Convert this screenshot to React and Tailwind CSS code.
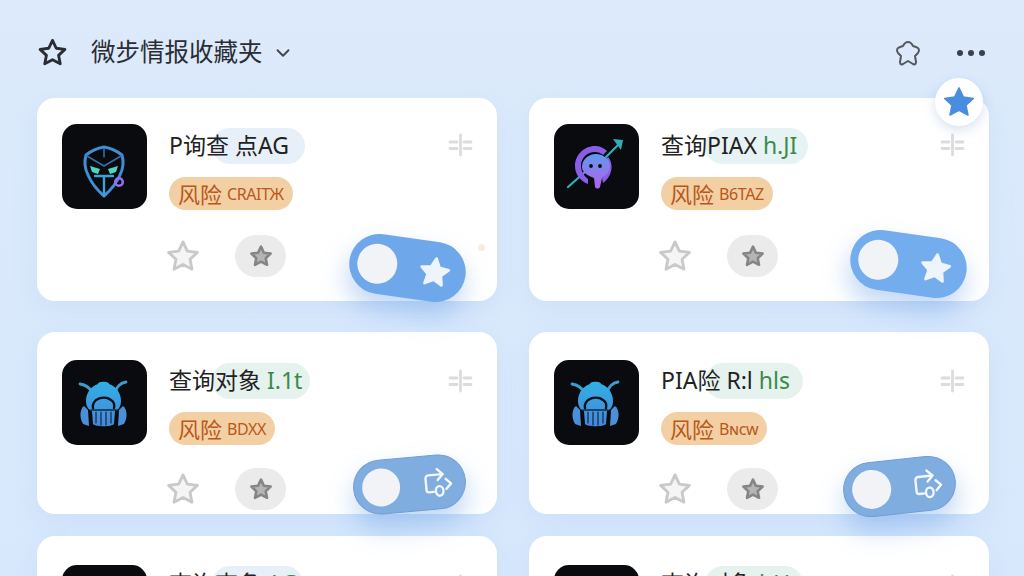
import React from "react";
import { ChevronDown } from "lucide-react";

const STAR = "M12 2.6l2.9 6.1 6.7.9-4.9 4.6 1.3 6.6-6-3.2-6 3.2 1.3-6.6-4.9-4.6 6.7-.9z";

const Star = ({ className, fill = "none", stroke = "currentColor", strokeWidth = 2 }) => (
  <svg viewBox="0 0 24 24" className={className} fill={fill} stroke={stroke} strokeWidth={strokeWidth} strokeLinejoin="round">
    <path d={STAR} />
  </svg>
);

const MaskLogo = () => (
  <svg viewBox="0 0 85 85" className="w-[85px] h-[85px]" fill="none" strokeLinejoin="round" strokeLinecap="round">
    <path d="M42 23c6 1 13 4 18 8 2 7 1 14-2 20-3 7-8 14-16 21-8-7-13-14-16-21-3-6-4-13-2-20 5-4 12-7 18-8z" stroke="#3f8fd6" strokeWidth="3" />
    <path d="M25 32l17 10 17-10M42 25v8" stroke="#2f6fae" strokeWidth="1.6" />
    <path d="M33 52h18M42 52v19" stroke="#3f9fd6" strokeWidth="2.4" />
    <path d="M28 42l10 3-2 5-6-2z" fill="#4fd6c0" />
    <path d="M56 42l-10 3 2 5 6-2z" fill="#4fd6c0" />
    <circle cx="57" cy="58" r="3.8" stroke="#9a6cf0" strokeWidth="2.6" />
  </svg>
);

const TrunkLogo = () => (
  <svg viewBox="0 0 85 85" className="w-[85px] h-[85px]" fill="none" strokeLinecap="round" strokeLinejoin="round">
    <defs>
      <linearGradient id="trunk" x1="0" y1="0" x2="0" y2="1">
        <stop offset="0" stopColor="#5f9bf0" />
        <stop offset="1" stopColor="#b45fe8" />
      </linearGradient>
    </defs>
    <path d="M14 63l17-15M52 33l15-15" stroke="#2fb0b8" strokeWidth="2.2" />
    <path d="M59 15l10 1-2 10z" fill="#2fb0b8" />
    <path d="M34 60c-8-3-13-10-13-18 0-11 9-20 20-20 5 0 9 2 12 5l-4 4c-2-2-5-3-8-3-8 0-14 6-14 14 0 5 3 10 7 13z" fill="#8a5ce8" />
    <path d="M54 33c5 5 6 18-5 26l-1-5c5-5 6-12 3-18z" fill="#8a5ce8" />
    <path d="M28 43a14 13 0 0 1 28 0c0 6-6 9-8 11l-2 9c-1 2-4 2-5 0l-1-9c-5-2-12-5-12-11z" fill="url(#trunk)" />
    <circle cx="37" cy="42" r="1.9" fill="#0b0b10" />
    <circle cx="46" cy="42" r="1.9" fill="#0b0b10" />
  </svg>
);

const BugLogo = () => (
  <svg viewBox="0 0 85 85" className="w-[85px] h-[85px]" fill="none" strokeLinecap="round" strokeLinejoin="round">
    <defs>
      <linearGradient id="bug" x1="0" y1="0" x2="0" y2="1">
        <stop offset="0" stopColor="#2fb0e6" />
        <stop offset="1" stopColor="#4a86d8" />
      </linearGradient>
    </defs>
    <path d="M31 33c-3-5-6-8-13-9M52 33c3-5 5-10 12-11" stroke="#3d9ccc" strokeWidth="2.8" />
    <path d="M36 24c0-3 11-3 11 0 7 2 12 9 12 17 0 6-3 9-6 10l-1 13c-2 3-19 3-21 0l-1-13c-3-1-6-4-6-10 0-8 5-15 12-17z" fill="url(#bug)" />
    <path d="M31 48c-1-4 1-6 3-8 5-3 11-3 15 0 3 2 4 4 3 8" stroke="#0b1016" strokeWidth="2.4" />
    <path d="M29 50h25" stroke="#0d2a44" strokeWidth="1.6" />
    <path d="M34 52v11M39 52v13M44 52v13M49 52v11" stroke="#0d2a44" strokeWidth="1.2" />
    <path d="M22 46c-4 3-5 11-1 18l6 2-1-16z" fill="#4a8fd8" />
    <path d="M61 46c4 3 5 11 1 18l-6 2 1-16z" fill="#4a8fd8" />
  </svg>
);

const ShareIcon = () => (
  <svg viewBox="0 0 34 34" className="w-[34px] h-[34px]" fill="none" stroke="#f4f7fc" strokeWidth="2.4" strokeLinecap="round" strokeLinejoin="round">
    <path d="M12 26H7a2 2 0 0 1-2-2V12a3 3 0 0 1 3-3h14" />
    <path d="M17 3.5l5.5 5.5-5.5 5.5" />
    <ellipse cx="18" cy="25.5" rx="3.8" ry="4.8" />
    <path d="M25 14l5 5-5 5" />
  </svg>
);

const Grip = () => (
  <svg viewBox="0 0 25 25" className="w-[25px] h-[25px] shrink-0" stroke="#dcdcdc" strokeWidth="2.8" strokeLinecap="round">
    <path d="M12.5 2v20M2 9h7M2 15.5h7M16 9h7M16 15.5h7" />
  </svg>
);

const cards = [
  {
    logo: <MaskLogo />,
    title: "P询查 点AG",
    tag: "",
    pill: "left-[43px] w-[93px] bg-[#e7f0f9]",
    code: "CRAITЖ",
    box: "h-[203px] pt-[26px] mb-[9px]",
    titleBox: "pt-1",
    actions: "mt-[25px]",
    toggle: "left-[312px] top-[140px] w-[117px] h-[60px] rotate-[8deg] bg-[#6fa8ea] pl-2 pr-[14px]",
    knob: "w-10 h-10",
    icon: <Star className="w-[34px] h-[34px]" fill="#eef4fc" stroke="#eef4fc" />,
  },
  {
    logo: <TrunkLogo />,
    title: "查询PIAX ",
    tag: "h.JI",
    pill: "left-[44px] w-[103px] bg-[#e6f2f3]",
    code: "B6TAZ",
    box: "h-[203px] pt-[26px] mb-[9px]",
    titleBox: "pt-1",
    actions: "mt-[25px]",
    toggle: "left-[321px] top-[136px] w-[117px] h-[60px] rotate-[8deg] bg-[#74adee] pl-2 pr-[14px]",
    knob: "w-10 h-10",
    icon: <Star className="w-[34px] h-[34px]" fill="#eef4fc" stroke="#eef4fc" />,
  },
  {
    logo: <BugLogo />,
    title: "查询对象 ",
    tag: "I.1t",
    pill: "left-[43px] w-[98px] bg-[#e6f2ee]",
    code: "BDXX",
    box: "h-[182px] pt-[28px]",
    titleBox: "pt-[3px]",
    actions: "mt-[23px]",
    toggle: "left-[316px] top-[125px] w-[113px] h-[55px] -rotate-[5deg] bg-[#7fade0] border border-[#6f9fd6] pl-2 pr-[10px]",
    knob: "w-[38px] h-[38px]",
    icon: <ShareIcon />,
  },
  {
    logo: <BugLogo />,
    title: "PIA险 R:l ",
    tag: "hls",
    pill: "left-[44px] w-[98px] bg-[#e6f2ee]",
    code: "Bɴcw",
    box: "h-[182px] pt-[28px]",
    titleBox: "pt-[3px]",
    actions: "mt-[23px]",
    toggle: "left-[314px] top-[127px] w-[113px] h-[55px] -rotate-[6deg] bg-[#7fade0] border border-[#6f9fd6] pl-2 pr-[10px]",
    knob: "w-[39px] h-[39px]",
    icon: <ShareIcon />,
  },
  {
    logo: <BugLogo />,
    title: "查询查条 ",
    tag: "AG",
    pill: "left-[43px] w-[91px] bg-[#e7f0f9]",
    code: "CRAIT",
    box: "h-[182px] pt-[29px]",
    titleBox: "pt-px",
    actions: "mt-[23px]",
  },
  {
    logo: <BugLogo />,
    title: "查询对象 ",
    tag: "hU",
    pill: "left-[44px] w-[98px] bg-[#e6f2ee]",
    code: "BDXX",
    box: "h-[182px] pt-[29px]",
    titleBox: "pt-px",
    actions: "mt-[23px]",
  },
];

function Card({ card, index }) {
  return (
    <div className={`relative bg-white rounded-[18px] pl-[25px] pr-6 shadow-[0_8px_24px_rgba(150,190,240,0.18)] ${card.box}`}>
      <div className="flex items-start gap-[22px]">
        <div className="w-[85px] h-[85px] rounded-[15px] bg-[#0a0b0e] overflow-hidden shrink-0">{card.logo}</div>
        <div className={`flex-1 ${card.titleBox}`}>
          <div className="relative h-9 flex items-center pb-[2px] text-[23px] leading-none text-[#222]">
            <span className={`absolute top-0 h-9 rounded-full ${card.pill}`} />
            <span className="relative whitespace-pre">{card.title}</span>
            <span className="relative text-[#3a8a4a]">{card.tag}</span>
          </div>
          <div className="mt-[13px] inline-flex items-center gap-[5px] h-[33px] px-[9px] rounded-full bg-[#f3cfa4] text-[#b8581a]">
            <span className="text-[22px] leading-none">风险</span>
            <span className="text-[16px] leading-none tracking-tight">{card.code}</span>
          </div>
        </div>
        <div className="mt-[9px]"><Grip /></div>
      </div>
      <div className={`flex items-center gap-[34px] ml-[103px] ${card.actions}`}>
        <Star className="w-[36px] h-[36px]" fill="#f5f5f5" stroke="#c9c9c9" strokeWidth={1.9} />
        <div className="w-[51px] h-[42px] rounded-full bg-[#ebebeb] flex items-center justify-center">
          <Star className="w-[24px] h-[24px]" fill="#b5b5b5" stroke="#858585" strokeWidth={2.6} />
        </div>
      </div>
      {card.toggle && (
        <div className={`absolute z-10 flex items-center justify-between rounded-full shadow-[0_14px_26px_rgba(90,150,230,0.38)] ${card.toggle}`}>
          <div className={`rounded-full bg-[#f2f3f7] ${card.knob}`} />
          {card.icon}
        </div>
      )}
      {index === 0 && <span className="absolute left-[441px] top-[146px] w-[7px] h-[7px] rounded-full bg-[#f5ecdf]" />}
      {index === 1 && (
        <div className="absolute z-10 left-[406px] -top-5 w-12 h-12 rounded-full bg-white flex items-center justify-center shadow-[0_4px_12px_rgba(100,140,200,0.25)]">
          <Star className="w-[36px] h-[36px]" fill="#4a8de0" stroke="#4a8de0" strokeWidth={1} />
        </div>
      )}
    </div>
  );
}

export default function App() {
  return (
    <div className="h-[576px] overflow-hidden bg-gradient-to-b from-[#dceafb] to-[#d7e8fc] pl-[37px] pr-[35px] font-['Noto_Sans','Noto_Sans_CJK_SC',sans-serif]">
      <div className="h-[98px] flex items-center pt-[7px] text-[#2a2d33]">
        <Star className="w-[31px] h-[31px]" strokeWidth={2.2} />
        <span className="ml-[23px] text-[24.5px] leading-none">微步情报收藏夹</span>
        <ChevronDown className="ml-[9px] w-[22px] h-[22px] text-[#444]" strokeWidth={2} />
        <svg viewBox="0 0 28 28" className="ml-auto w-[28px] h-[28px]" fill="none" stroke="#55595f" strokeWidth="2" strokeLinejoin="round">
          <path d="M14 3c3 0 4 2 5 4l3 1c3 1 4 3 2 6l-3 3 1 6c0 2-1 3-3 2l-5-3-5 3c-2 1-3 0-3-2l1-6-3-3c-2-3-1-5 2-6l3-1c1-2 2-4 5-4z" />
        </svg>
        <div className="ml-[35px] mr-[4px] flex gap-[5px]">
          <span className="w-[6px] h-[6px] rounded-full bg-[#3c4048]" />
          <span className="w-[6px] h-[6px] rounded-full bg-[#3c4048]" />
          <span className="w-[6px] h-[6px] rounded-full bg-[#3c4048]" />
        </div>
      </div>
      <div className="grid grid-cols-2 gap-x-8 gap-y-[22px] items-start">
        {cards.map((card, i) => (
          <Card key={i} card={card} index={i} />
        ))}
      </div>
    </div>
  );
}
